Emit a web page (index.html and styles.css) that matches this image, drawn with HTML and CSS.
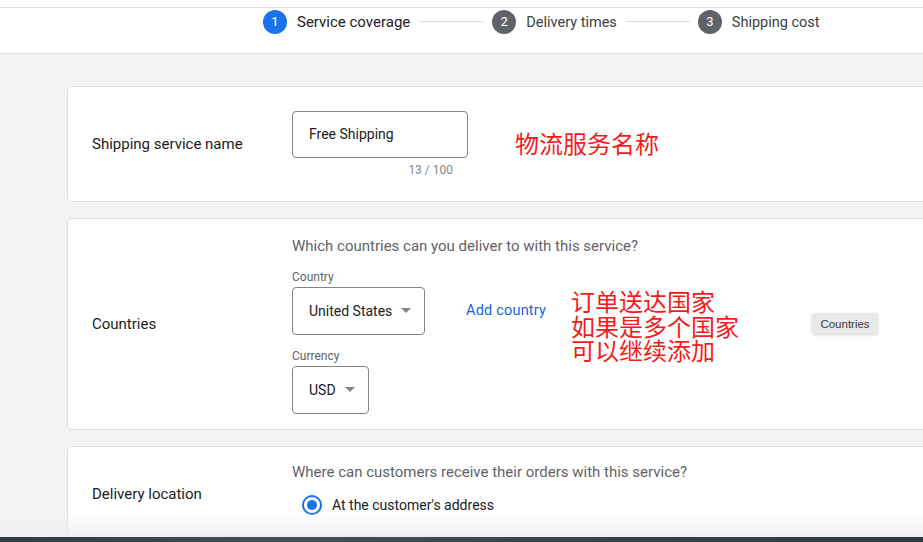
FILE: index.html
```html
<!DOCTYPE html>
<html lang="en">
<head>
<meta charset="utf-8">
<title>Shipping service</title>
<link rel="stylesheet" href="styles.css">
</head>
<body>
<header class="topbar">
  <div class="steps">
    <div class="step step-active"><span class="step-num">1</span><span class="step-label">Service coverage</span></div>
    <div class="step-line"></div>
    <div class="step"><span class="step-num">2</span><span class="step-label step-label-narrow">Delivery times</span></div>
    <div class="step-line step-line-2"></div>
    <div class="step"><span class="step-num">3</span><span class="step-label step-label-narrow">Shipping cost</span></div>
  </div>
</header>
<main class="content">
  <section class="card card-name">
    <div class="card-label">Shipping service name</div>
    <div class="card-body">
      <div class="text-field">Free Shipping</div>
      <div class="counter">13 / 100</div>
    </div>
    <div class="note note-name">物流服务名称</div>
  </section>

  <section class="card card-countries">
    <div class="card-label">Countries</div>
    <div class="card-body">
      <div class="question">Which countries can you deliver to with this service?</div>
      <div class="field-label">Country</div>
      <div class="select-row">
        <div class="select select-country">United States<span class="caret"></span></div>
        <a class="link">Add country</a>
      </div>
      <div class="field-label field-label-2">Currency</div>
      <div class="select select-currency">USD<span class="caret"></span></div>
    </div>
    <div class="note note-countries">订单送达国家<br>如果是多个国家<br>可以继续添加</div>
    <div class="tooltip">Countries</div>
  </section>

  <section class="card card-location">
    <div class="card-label">Delivery location</div>
    <div class="card-body">
      <div class="question">Where can customers receive their orders with this service?</div>
      <label class="radio-row"><span class="radio"><span class="radio-dot"></span></span>At the customer's address</label>
    </div>
  </section>
</main>
<div class="fade"></div>
<div class="desktop-strip"></div>
</body>
</html>
```

FILE: styles.css
```css
* { box-sizing: border-box; }
html, body {
  margin: 0;
  padding: 0;
  width: 923px;
  height: 542px;
  overflow: hidden;
  background: #f3f3f3;
  font-family: Roboto, "Noto Sans", Arial, sans-serif;
  color: #202124;
  position: relative;
}
.topbar {
  height: 54px;
  background: #fff;
  border-bottom: 1px solid #e2e2e2;
  padding-top: 7px;
}
.steps {
  border-top: 1px solid #e4e4e4;
  display: flex;
  align-items: center;
  height: 28px;
  padding-left: 263px;
}
.step {
  display: flex;
  align-items: center;
}
.step-num {
  width: 24px;
  height: 24px;
  border-radius: 50%;
  background: #5f6368;
  color: #fff;
  font-size: 13px;
  display: flex;
  align-items: center;
  justify-content: center;
}
.step-active .step-num { background: #1a73e8; }
.step-label {
  margin-left: 10px;
  font-size: 15px;
  color: #3c4043;
}
.step-label-narrow { font-size: 14.5px; padding-top: 1px; }
.step-active .step-label { color: #202124; }
.step-line {
  width: 64px;
  height: 1px;
  background: #dadce0;
  margin: 0 9px;
}
.step-line-2 { margin: 0 8px 0 9px; }
.content {
  padding: 32px 0 0 67px;
  display: flex;
  flex-direction: column;
  gap: 16px;
}
.card {
  position: relative;
  width: 900px;
  background: #fff;
  border: 1px solid #e0e0e0;
  border-radius: 4px;
  display: flex;
  align-items: center;
}
.card-label {
  width: 224px;
  padding-left: 24px;
  font-size: 15px;
  color: #202124;
  flex-shrink: 0;
}
.card-name { height: 116px; }
.card-name .card-body { padding-top: 0; width: 176px; }
.text-field {
  height: 47px;
  border: 1px solid #80868b;
  border-radius: 4px;
  padding: 0 16px;
  display: flex;
  align-items: center;
  font-size: 14px;
  padding-bottom: 1px;
}
.counter {
  text-align: right;
  font-size: 12px;
  color: #80868b;
  padding-right: 15px;
  margin-top: 5px;
}
.note {
  position: absolute;
  color: #f21c1c;
  font-family: "Noto Sans CJK SC", sans-serif;
  font-size: 24px;
  line-height: 24.5px;
}
.note-name { left: 447px; top: 44px; }
.note-countries { left: 503px; top: 70px; }
.card-countries { height: 212px; }
.card-countries .card-body { padding-top: 1px; }
.question {
  font-size: 15px;
  color: #5f6368;
  line-height: 20px;
}
.field-label {
  font-size: 12px;
  color: #5f6368;
  margin-top: 14px;
  line-height: 14px;
}
.field-label-2 { margin-top: 14px; }
.select-row {
  display: flex;
  align-items: center;
  margin-top: 3px;
}
.select {
  height: 48px;
  border: 1px solid #80868b;
  border-radius: 4px;
  display: flex;
  align-items: center;
  padding-left: 16px;
  font-size: 14px;
  color: #202124;
}
.select-country { width: 133px; }
.select-currency { width: 77px; margin-top: 3px; }
.caret {
  width: 0;
  height: 0;
  border-left: 5px solid transparent;
  border-right: 5px solid transparent;
  border-top: 5px solid #80868b;
  margin-left: 9px;
}
.link {
  margin-left: 41px;
  color: #1a63d6;
  font-size: 14.5px;
  letter-spacing: 0.2px;
}
.tooltip {
  position: absolute;
  left: 744px;
  top: 94px;
  width: 66px;
  height: 21px;
  background: #e9e9e9;
  border-radius: 3px;
  box-shadow: 0 1px 3px rgba(0,0,0,0.18);
  font-family: "Liberation Sans", Arial, sans-serif;
  font-size: 11.5px;
  color: #3a3a3a;
  display: flex;
  align-items: center;
  justify-content: center;
}
.card-location {
  height: 110px;
  align-items: flex-start;
}
.card-location .card-label { padding-top: 38px; }
.card-location .card-body { padding-top: 15px; }
.radio-row {
  display: flex;
  align-items: center;
  margin-top: 13px;
  padding-left: 10px;
  font-size: 14px;
  color: #202124;
}
.radio {
  width: 20px;
  height: 20px;
  border-radius: 50%;
  border: 2px solid #1a73e8;
  display: flex;
  align-items: center;
  justify-content: center;
  margin-right: 10px;
}
.radio-dot {
  width: 10px;
  height: 10px;
  border-radius: 50%;
  background: #1a73e8;
}
.fade {
  position: absolute;
  left: 0;
  right: 0;
  top: 512px;
  height: 25px;
  background: linear-gradient(rgba(240,240,240,0), rgba(238,238,238,0.9));
}
.desktop-strip {
  position: absolute;
  left: 0;
  right: 0;
  top: 537px;
  height: 5px;
  background: linear-gradient(90deg, #2e3d44, #3d5157 30%, #33474d 60%, #2c3b40);
}
```
